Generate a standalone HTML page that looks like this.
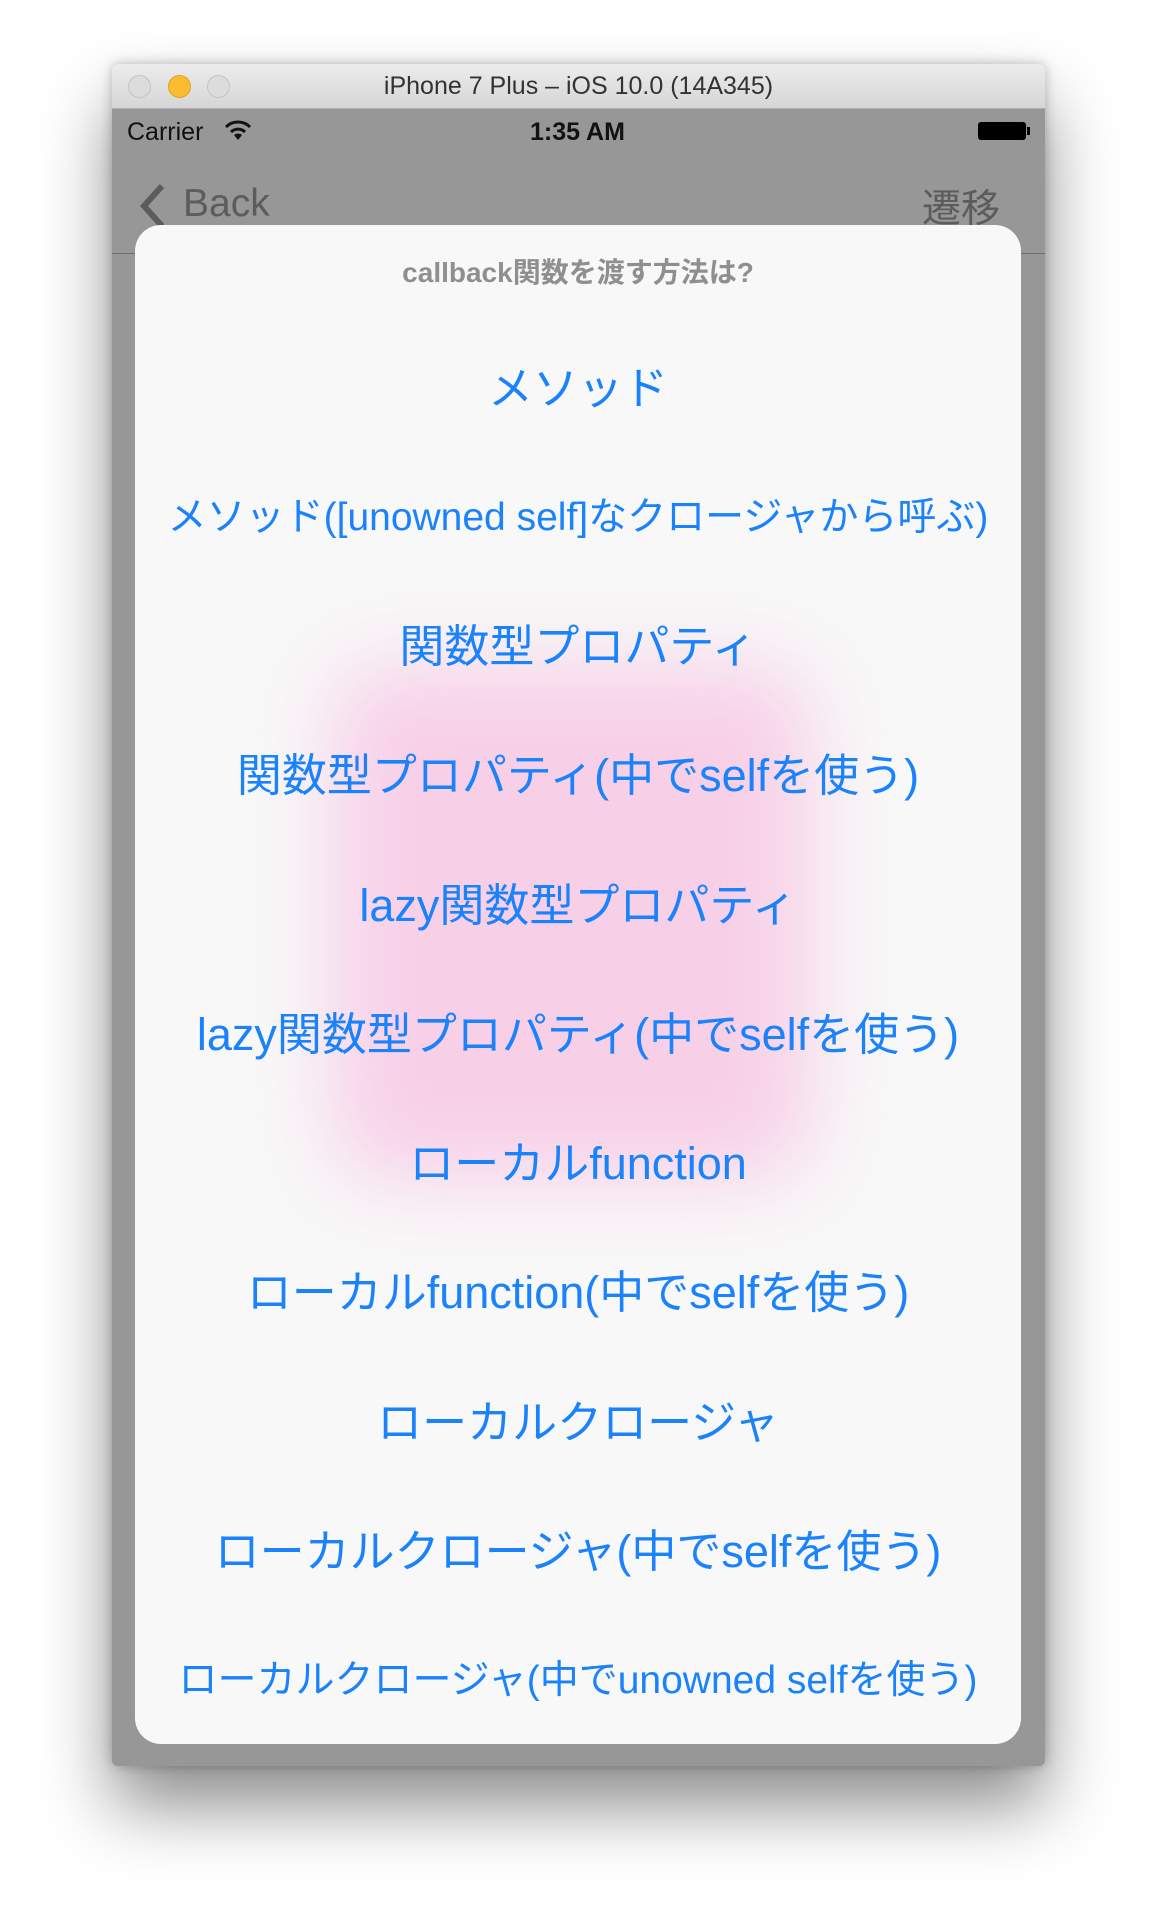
<!DOCTYPE html>
<html><head><meta charset="utf-8"><style>
body{margin:0;width:1156px;height:1924px;background:#fff;position:relative;overflow:hidden;font-family:"Liberation Sans","Noto Sans CJK JP",sans-serif}
.win{position:absolute;left:112px;top:64px;width:933px;height:1702px;background:#979797;border-radius:6px;box-shadow:0 40px 70px rgba(0,0,0,.45),0 0 12px rgba(0,0,0,.25);overflow:hidden}
.tb{position:absolute;left:0;top:0;width:100%;height:44px;background:linear-gradient(#ececec,#d6d6d6);border-bottom:1px solid #b0b0b0;text-align:center;line-height:44px;font-size:25px;color:#333}
.dot{position:absolute;top:11px;width:21px;height:21px;border-radius:50%;background:#dcdcdc;border:1px solid #c4c4c4}
.st{position:absolute;top:54px;font-size:25px;color:#111}
.nav{position:absolute;top:118px;font-size:39px;color:#5c5c5c}
.line{position:absolute;left:0;top:189px;width:100%;height:1px;background:#6f6f6f}
.sheet{position:absolute;left:23px;top:161px;width:886px;height:1519px;background:#f8f8f8;border-radius:26px;overflow:hidden}
.blob{position:absolute;left:197px;top:440px;width:480px;height:516px;background:#f7d0e8;filter:blur(40px);border-radius:60px}
.t{position:absolute;left:0;width:100%;text-align:center;white-space:nowrap}
.h{top:26px;font-size:28px;font-weight:bold;color:#8f8f8f}
.i{color:#1a82fb;font-size:45px;line-height:60px}
.s{font-size:39px}
</style></head><body>
<div class="win">
 <div class="tb">iPhone 7 Plus – iOS 10.0 (14A345)
  <div class="dot" style="left:16px"></div>
  <div class="dot" style="left:56px;background:#fdbc2f;border-color:#e0a024"></div>
  <div class="dot" style="left:95px"></div>
 </div>
 <div class="st" style="left:15px">Carrier</div>
 <svg style="position:absolute;left:112px;top:54px" width="28" height="24"><path d="M2 9 A17 17 0 0 1 26 9" stroke="#111" stroke-width="3" fill="none"/><path d="M7 14 A10 10 0 0 1 21 14" stroke="#111" stroke-width="3" fill="none"/><path d="M14 22 L10 17 A6 6 0 0 1 18 17 Z" fill="#111"/></svg>
 <div class="st" style="left:418px;font-weight:bold">1:35 AM</div>
 <div style="position:absolute;left:866px;top:58px;width:48px;height:18px;background:#000;border-radius:3px"></div>
 <div style="position:absolute;left:915px;top:63px;width:3px;height:8px;background:#000"></div>
 <div class="nav" style="left:71px">Back</div>
 <svg style="position:absolute;left:26px;top:118px" width="30" height="48"><path d="M24 4 L6 24 L24 44" stroke="#5c5c5c" stroke-width="6" fill="none"/></svg>
 <div class="nav" style="left:810px;top:114px">遷移</div>
 <div class="line"></div>
 <div class="sheet">
  <div class="blob"></div>
  <div class="t h">callback関数を渡す方法は?</div>
  <div class="t i" style="top:134px">メソッド</div>
  <div class="t i s" style="top:263px">メソッド([unowned self]なクロージャから呼ぶ)</div>
  <div class="t i" style="top:392px">関数型プロパティ</div>
  <div class="t i" style="top:521px">関数型プロパティ(中でselfを使う)</div>
  <div class="t i" style="top:651px">lazy関数型プロパティ</div>
  <div class="t i" style="top:780px">lazy関数型プロパティ(中でselfを使う)</div>
  <div class="t i" style="top:909px">ローカルfunction</div>
  <div class="t i" style="top:1038px">ローカルfunction(中でselfを使う)</div>
  <div class="t i" style="top:1168px">ローカルクロージャ</div>
  <div class="t i" style="top:1297px">ローカルクロージャ(中でselfを使う)</div>
  <div class="t i s" style="top:1426px">ローカルクロージャ(中でunowned selfを使う)</div>
 </div>
</div>
</body></html>
